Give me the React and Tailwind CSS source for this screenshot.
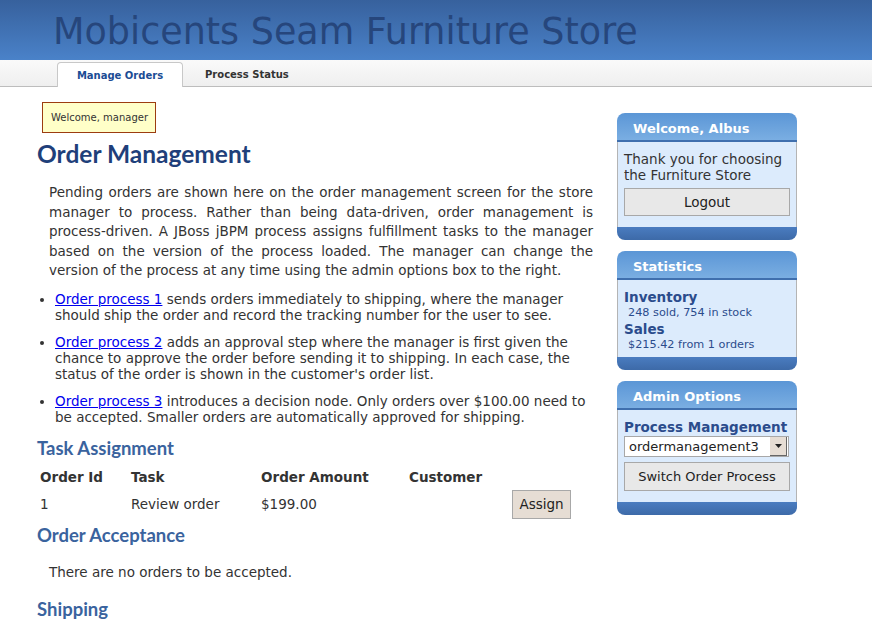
import React from 'react';

const SideBox = ({ title, children }) => (
  <div className="w-[180px] mb-[11px]">
    <div className="h-[29px] rounded-t-[8px] bg-gradient-to-b from-[#5b96d6] to-[#7aaee2] border-b-2 border-[#3f6fae] pl-[16px] pt-[4px] flex items-center text-white font-bold text-[13px]">
      {title}
    </div>
    <div className="bg-[#dcebfc] border-x border-[#b4b4b4] px-[6px] pt-[9px] pb-[4px]">{children}</div>
    <div className="h-[13px] rounded-b-[8px] bg-gradient-to-b from-[#4a7cc0] to-[#3d6aa8]"></div>
  </div>
);

const App = () => {
  return (
    <div className="w-[872px] h-[640px] overflow-hidden bg-white text-[#333] font-['DejaVu_Sans',sans-serif]">
      <div className="h-[60px] bg-gradient-to-b from-[#37619d] to-[#4a82c9] pl-[53px] flex items-center">
        <h1 className="text-[36.5px] leading-none text-[#26467c] pt-[4px]">Mobicents Seam Furniture Store</h1>
      </div>
      <div className="h-[27px] bg-gradient-to-b from-[#fafafa] to-[#efefef] border-b border-[#bdbdbd] flex items-end pl-[57px]">
        <div className="h-[25px] w-[126px] bg-white border border-b-0 border-[#c8c8c8] rounded-t-[4px] flex items-center justify-center pt-[1px] text-[10px] font-bold text-[#1b4c94] -mb-px">
          Manage Orders
        </div>
        <div className="h-[25px] px-[22px] pt-[2px] flex items-center text-[10px] font-bold text-[#333]">Process Status</div>
      </div>
      <div className="flex">
        <div className="w-[556px] ml-[37px]">
          <div className="mt-[15px] ml-[5px] w-[114px] h-[31px] bg-[#ffffc8] border border-[#9c3c10] flex items-center pl-[8px] text-[10px] whitespace-nowrap text-[#333]">
            Welcome, manager
          </div>
          <h2 className="mt-[7px] text-[24.5px] leading-[28px] font-bold text-[#1f3f7a] font-['Lato',sans-serif]">Order Management</h2>
          <p className="mt-[15px] pl-[12px] text-[13.5px] leading-[19.5px] text-justify">
            Pending orders are shown here on the order management screen for the store manager to process. Rather than being data-driven, order management is process-driven. A JBoss jBPM process assigns fulfillment tasks to the manager based on the version of the process loaded. The manager can change the version of the process at any time using the admin options box to the right.
          </p>
          <ul className="mt-[10px] pl-[18px] list-disc text-[13.5px] leading-[16px]">
            <li className="mb-[11px]">
              <a href="#" className="text-[#0000ee] underline">Order process 1</a> sends orders immediately to shipping, where the manager should ship the order and record the tracking number for the user to see.
            </li>
            <li className="mb-[11px]">
              <a href="#" className="text-[#0000ee] underline">Order process 2</a> adds an approval step where the manager is first given the chance to approve the order before sending it to shipping. In each case, the status of the order is shown in the customer's order list.
            </li>
            <li>
              <a href="#" className="text-[#0000ee] underline">Order process 3</a> introduces a decision node. Only orders over $100.00 need to be accepted. Smaller orders are automatically approved for shipping.
            </li>
          </ul>
          <h3 className="mt-[12px] text-[18.5px] leading-[22px] font-bold text-[#3a639e] font-['Lato',sans-serif]">Task Assignment</h3>
          <table className="mt-[7px] text-[13.5px] border-separate border-spacing-0">
            <thead>
              <tr className="h-[24px]">
                <th className="text-left font-bold w-[94px] pl-[3px]">Order Id</th>
                <th className="text-left font-bold w-[130px]">Task</th>
                <th className="text-left font-bold w-[148px]">Order Amount</th>
                <th className="text-left font-bold w-[103px]">Customer</th>
                <th className="w-[70px]"></th>
              </tr>
            </thead>
            <tbody>
              <tr className="h-[30px]">
                <td className="pl-[3px]">1</td>
                <td>Review order</td>
                <td>$199.00</td>
                <td></td>
                <td>
                  <button className="w-[59px] h-[29px] bg-[#e6ddd4] border border-[#a8a8a8] text-[13.5px] text-[#222]">Assign</button>
                </td>
              </tr>
            </tbody>
          </table>
          <h3 className="mt-[4px] text-[18.5px] leading-[22px] font-bold text-[#3a639e] font-['Lato',sans-serif]">Order Acceptance</h3>
          <p className="mt-[18px] pl-[12px] text-[13.5px] leading-[16px]">There are no orders to be accepted.</p>
          <h3 className="mt-[18px] text-[18.5px] leading-[22px] font-bold text-[#3a639e] font-['Lato',sans-serif]">Shipping</h3>
        </div>
        <div className="ml-[24px] mt-[26px]">
          <SideBox title="Welcome, Albus">
            <p className="text-[13.5px] leading-[16px] text-[#333]">Thank you for choosing the Furniture Store</p>
            <button className="mt-[5px] mb-[7px] w-[166px] h-[28px] bg-[#e8e8e8] border border-[#a8a8a8] text-[13.5px] text-[#222]">Logout</button>
          </SideBox>
          <SideBox title="Statistics">
            <div className="text-[13.5px] leading-[16px] font-bold text-[#2b4c8c]">Inventory</div>
            <div className="text-[11.25px] leading-[16px] pl-[4px] text-[#2b4c8c]">248 sold, 754 in stock</div>
            <div className="text-[13.5px] leading-[16px] font-bold text-[#2b4c8c]">Sales</div>
            <div className="text-[11.25px] leading-[16px] pl-[4px] text-[#2b4c8c]">$215.42 from 1 orders</div>
          </SideBox>
          <SideBox title="Admin Options">
            <div className="text-[13.5px] leading-[16px] font-bold text-[#2b4c8c]">Process Management</div>
            <div className="mt-[1px] w-[165px] h-[21px] bg-white border border-[#a8a8a8] flex items-center">
              <span className="flex-1 pl-[4px] text-[13px] text-[#222] whitespace-nowrap">ordermanagement3</span>
              <span className="w-[17px] h-[19px] mr-[1px] bg-[#e6ddd4] border-r border-b border-[#666] flex items-center justify-center">
                <svg width="7" height="4" viewBox="0 0 7 4"><path d="M0 0h7L3.5 4z" fill="#222" /></svg>
              </span>
            </div>
            <button className="mt-[5px] mb-[7px] w-[166px] h-[29px] bg-[#e8e8e8] border border-[#a8a8a8] text-[13px] text-[#222]">Switch Order Process</button>
          </SideBox>
        </div>
      </div>
    </div>
  );
};

export default App;
